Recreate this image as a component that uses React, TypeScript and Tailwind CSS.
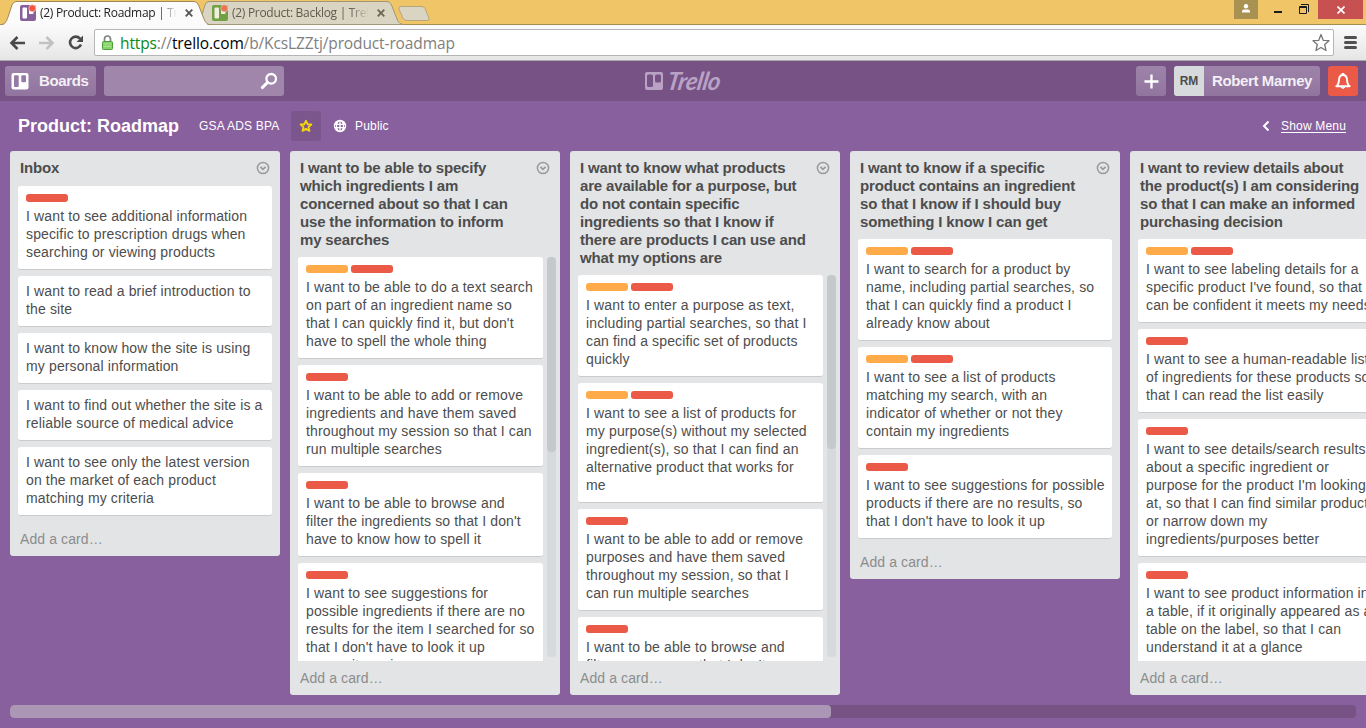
import React from "react";

type Label = "o" | "r";
type Card = { labels?: Label[]; text: string };
type List = { title: string; cards: Card[]; thumb?: string; fixed?: boolean };

const lists: List[] = [
  {
    title: "Inbox",
    cards: [
      { labels: ["r"], text: "I want to see additional information\nspecific to prescription drugs when\nsearching or viewing products" },
      { text: "I want to read a brief introduction to\nthe site" },
      { text: "I want to know how the site is using\nmy personal information" },
      { text: "I want to find out whether the site is a\nreliable source of medical advice" },
      { text: "I want to see only the latest version\non the market of each product\nmatching my criteria" },
    ],
  },
  {
    title: "I want to be able to specify\nwhich ingredients I am\nconcerned about so that I can\nuse the information to inform\nmy searches",
    fixed: true,
    thumb: "h-[195px]",
    cards: [
      { labels: ["o", "r"], text: "I want to be able to do a text search\non part of an ingredient name so\nthat I can quickly find it, but don't\nhave to spell the whole thing" },
      { labels: ["r"], text: "I want to be able to add or remove\ningredients and have them saved\nthroughout my session so that I can\nrun multiple searches" },
      { labels: ["r"], text: "I want to be able to browse and\nfilter the ingredients so that I don't\nhave to know how to spell it" },
      { labels: ["r"], text: "I want to see suggestions for\npossible ingredients if there are no\nresults for the item I searched for so\nthat I don't have to look it up\nacross items in" },
    ],
  },
  {
    title: "I want to know what products\nare available for a purpose, but\ndo not contain specific\ningredients so that I know if\nthere are products I can use and\nwhat my options are",
    fixed: true,
    thumb: "h-[174px]",
    cards: [
      { labels: ["o", "r"], text: "I want to enter a purpose as text,\nincluding partial searches, so that I\ncan find a specific set of products\nquickly" },
      { labels: ["o", "r"], text: "I want to see a list of products for\nmy purpose(s) without my selected\ningredient(s), so that I can find an\nalternative product that works for\nme" },
      { labels: ["r"], text: "I want to be able to add or remove\npurposes and have them saved\nthroughout my session, so that I\ncan run multiple searches" },
      { labels: ["r"], text: "I want to be able to browse and\nfilter purposes so that I don't" },
    ],
  },
  {
    title: "I want to know if a specific\nproduct contains an ingredient\nso that I know if I should buy\nsomething I know I can get",
    cards: [
      { labels: ["o", "r"], text: "I want to search for a product by\nname, including partial searches, so\nthat I can quickly find a product I\nalready know about" },
      { labels: ["o", "r"], text: "I want to see a list of products\nmatching my search, with an\nindicator of whether or not they\ncontain my ingredients" },
      { labels: ["r"], text: "I want to see suggestions for possible\nproducts if there are no results, so\nthat I don't have to look it up" },
    ],
  },
  {
    title: "I want to review details about\nthe product(s) I am considering\nso that I can make an informed\npurchasing decision",
    fixed: true,
    thumb: "h-[200px]",
    cards: [
      { labels: ["o", "r"], text: "I want to see labeling details for a\nspecific product I've found, so that I\ncan be confident it meets my needs" },
      { labels: ["r"], text: "I want to see a human-readable list\nof ingredients for these products so\nthat I can read the list easily" },
      { labels: ["r"], text: "I want to see details/search results\nabout a specific ingredient or\npurpose for the product I'm looking\nat, so that I can find similar products\nor narrow down my\ningredients/purposes better" },
      { labels: ["r"], text: "I want to see product information in\na table, if it originally appeared as a\ntable on the label, so that I can\nunderstand it at a glance" },
    ],
  },
];

function CardView({ card }: { card: Card }) {
  return (
    <div className={`shrink-0 whitespace-pre rounded-[3px] border-b border-[#c9cbcc] bg-white px-2 pb-2 text-[14px] leading-[18px] tracking-[0.135px] text-[#4d4d4d] ${card.labels ? "pt-2" : "pt-1.5"}`}>
      {card.labels && (
        <div className="mb-[5px] flex gap-[3px]">
          {card.labels.map((l, i) => (
            <span key={i} className={`h-2 w-[42px] rounded-[3px] ${l === "o" ? "bg-[#ffab4a]" : "bg-[#eb5a46]"}`} />
          ))}
        </div>
      )}
      {card.text}
    </div>
  );
}

function ListView({ list }: { list: List }) {
  return (
    <section className={`flex w-[270px] shrink-0 flex-col rounded-[3px] bg-[#e2e4e6] ${list.fixed ? "h-[544px]" : ""}`}>
      <header className="flex min-h-[35px] shrink-0 items-start justify-between pb-2 pl-2.5 pr-2.5 pt-2">
        <h2 className="whitespace-pre text-[15px] font-bold leading-[18px] tracking-[-0.165px] text-[#4d4d4d]">{list.title}</h2>
        <svg className="mt-[2px] shrink-0" width="14" height="14" viewBox="0 0 14 14" fill="none" stroke="#999" strokeWidth="1.5">
          <circle cx="7" cy="7" r="5.6" />
          <path d="M4.400 5.900 7 8.300 9.600 5.900" strokeWidth="1.700" />
        </svg>
      </header>
      <div className="flex min-h-0 flex-1 pl-2">
        <div className={`flex flex-col gap-1.5 overflow-hidden ${list.fixed ? "w-[245px]" : "w-[254px] pb-1.5"}`}>
          {list.cards.map((c, i) => (
            <CardView key={i} card={c} />
          ))}
        </div>
        {list.fixed && (
          <div className="mb-1 ml-1 w-[9px] rounded bg-[#d6dadc]">
            <div className={`rounded bg-[#c4c9cc] ${list.thumb}`} />
          </div>
        )}
      </div>
      <div className="h-[34px] shrink-0 px-2.5 py-2 text-[14px] leading-[18px] tracking-[0.1px] text-[#8c8c8c]">Add a card…</div>
    </section>
  );
}

function Favicon({ color, dim }: { color: string; dim?: boolean }) {
  return (
    <svg width="17" height="17" viewBox="0 0 17 17" className="shrink-0">
      <rect x="0" y="1" width="16" height="16" rx="2" fill={color} />
      <rect x="2.500" y="3.500" width="4.500" height="11" rx="1" fill={dim ? "#f0eedf" : "#fff"} />
      <rect x="9" y="3.500" width="4.500" height="6.500" rx="1" fill={dim ? "#f0eedf" : "#fff"} />
      <circle cx="12.300" cy="4.300" r="3.500" fill={dim ? "#ea7350" : "#f2543d"} stroke={dim ? "#e3cdbb" : "#f8ded8"} strokeWidth=".7" />
    </svg>
  );
}

function TabLabel({ children, active }: { children: React.ReactNode; active?: boolean }) {
  return (
    <span className={`overflow-hidden whitespace-pre font-['Open_Sans','Noto_Sans',sans-serif] text-[12px] leading-4 tracking-[-0.29px] ${active ? "w-[137px] text-[#222] [mask-image:linear-gradient(to_right,#000_86%,transparent)]" : "w-[137px] text-[#5f5a50] [mask-image:linear-gradient(to_right,#000_86%,transparent)]"}`}>
      {children}
    </span>
  );
}

function CloseX({ color }: { color: string }) {
  return (
    <svg width="8" height="8" viewBox="0 0 8 8" stroke={color} strokeWidth="1.800" className="shrink-0">
      <path d="M.7.7l6.600 6.600M7.300.7.7 7.300" />
    </svg>
  );
}

function TabStrip() {
  return (
    <div className="relative h-[25px] bg-[#efc568]">
      <svg className="absolute left-0 top-0" width="1366" height="25" viewBox="0 0 1366 25">
        <path d="M0 24.500H1366" stroke="#a58d50" />
        <path d="M195 24.500C200 24 199 22 201 18L205 5Q206 1.500 209 1.500H387Q390 1.500 391.500 5L397 19Q399 24.500 404 24.500Z" fill="#dad5c2" stroke="#a19777" />
        <path d="M401 6.500H422Q424 6.500 425 8.500L429 18Q430 20.500 427 20.500H407Q404 20.500 403 18.500L399 9Q398 6.500 401 6.500Z" fill="#dad5c2" stroke="#b5a77b" />
        <path d="M-2 25C6 24.500 6 22 8 17L12 5Q13.500 1.500 16 1.500H194Q197 1.500 198.500 5L204 19Q206 24.500 211 25Z" fill="#fbfbfb" stroke="#a18a51" />
        <rect x="4" y="24" width="203" height="1" fill="#fafafa" />
      </svg>
      <div className="relative flex h-[25px] items-center">
        <div className="ml-5 flex items-center"><Favicon color="#87609a" /><span className="ml-[3px] flex"><TabLabel active>(2) Product: Roadmap | Trello</TabLabel></span><span className="ml-[8px] flex"><CloseX color="#555" /></span></div>
        <div className="ml-[19px] flex items-center"><Favicon color="#72a144" dim /><span className="ml-[3px] flex"><TabLabel>(2) Product: Backlog | Trello</TabLabel></span><span className="ml-[8px] flex"><CloseX color="#6b6552" /></span></div>
      </div>
      <div className="absolute right-0 top-0 flex h-[19px] items-start">
        <div className="flex h-[19px] w-6 items-center justify-center bg-[#a99151]">
          <svg width="10" height="9" viewBox="0 0 10 9" fill="#fff" className="mb-[3px]"><circle cx="5" cy="2.200" r="2.200" /><path d="M1 8.500V7.500Q1 5.500 3 5.500H7Q9 5.500 9 7.500V8.500Z" /></svg>
        </div>
        <svg width="60" height="19" viewBox="0 0 60 19" fill="none" stroke="#1c1c1c">
          <path d="M16 12H24" strokeWidth="2" />
          <path d="M41.500 6.500H48.500V13.500H41.500ZM41 7.500H49" />
          <path d="M43 4.500H50.500V12" />
        </svg>
        <div className="mr-[3px] flex h-[19px] w-[45px] items-center justify-center bg-[#c75050]">
          <svg width="8" height="8" viewBox="0 0 8 8" stroke="#fff" strokeWidth="1.700"><path d="M.5.5l7 7M7.500.5l-7 7" /></svg>
        </div>
      </div>
    </div>
  );
}

function Toolbar() {
  return (
    <div className="flex h-9 items-center border-b border-[#a9a9a9] bg-linear-to-b from-[#fbfbfb] to-[#e6e6e6] pl-[9px] pr-[9px]">
      <svg width="76" height="18" viewBox="0 0 76 18" fill="none" strokeWidth="2.600">
        <path d="M16 9H2.500M8.500 3 2.500 9 8.500 15" stroke="#4a4a4a" />
        <path d="M30 9H43.500M37.500 3 43.500 9 37.500 15" stroke="#c2c2c2" />
        <path d="M71 4.600A5.700 5.700 0 1 0 72 10.500" stroke="#4a4a4a" />
        <path d="M74 1.500V8H67.500Z" fill="#4a4a4a" />
      </svg>
      <div className="ml-[9px] flex h-[27px] flex-1 items-center rounded-[2px] border border-[#b5b5b5] bg-white pl-[7px] pr-[2px]">
        <svg width="11" height="15" viewBox="0 0 11 15">
          <path d="M2.500 7V4A3 3 0 0 1 8.500 4V7" fill="none" stroke="#7e8580" strokeWidth="1.700" />
          <rect x=".5" y="6.500" width="10" height="8" rx="1" fill="#85d267" stroke="#4f9d3a" />
          <path d="M1.500 9H9.500M1.500 11.500H9.500" stroke="#a7e48b" />
        </svg>
        <span className="ml-[7px] flex-1 whitespace-pre font-['Open_Sans','Noto_Sans',sans-serif] text-[15.500px] leading-5 tracking-[-0.12px] text-[#808080]"><span className="text-[#0b8a15]">https</span>://<span className="text-black">trello.com</span>/b/KcsLZZtj/product-roadmap</span>
        <svg width="20" height="20" viewBox="0 0 20 20" fill="#fff" stroke="#777" strokeWidth="1.300" strokeLinejoin="round"><path d="M10 1.500 12.300 7.400 18 7.700 13.700 11.500 15 17.500 10 14.500 5 17.500 6.300 11.500 2 7.700 7.700 7.400Z" /></svg>
      </div>
      <div className="ml-[10px] flex w-[13px] flex-col gap-[2px]"><i className="h-[3px] rounded-sm bg-[#505050]" /><i className="h-[3px] rounded-sm bg-[#505050]" /><i className="h-[3px] rounded-sm bg-[#505050]" /></div>
    </div>
  );
}

function BoardMark({ color, hole, className }: { color: string; hole: string; className?: string }) {
  return (
    <svg width="18" height="18" viewBox="0 0 18 18" className={className}>
      <rect x=".5" y="1" width="17" height="16.500" rx="2" fill={color} />
      <rect x="3" y="3.300" width="4.700" height="11.700" rx="1" fill={hole} />
      <rect x="10.300" y="3.300" width="4.700" height="7" rx="1" fill={hole} />
    </svg>
  );
}

function TopBar() {
  const btn = "flex h-[30px] items-center rounded-[3px] bg-linear-to-b from-[#9d83a9] to-[#92759f]";
  return (
    <header className="grid h-10 grid-cols-[1fr_auto_1fr] items-center bg-[#765285] pl-[5px] pr-2 text-[15px] font-bold tracking-[-0.38px] text-[#f3eff5]">
      <div className="flex gap-2">
        <div className={`${btn} w-[91px] pl-1.5`}><BoardMark color="#fff" hole="#977ba4" /><span className="ml-[10px]">Boards</span></div>
        <div className="flex h-[30px] w-[180px] items-center justify-end rounded-[3px] bg-[#9f86aa] pr-1.5">
          <svg width="18" height="18" viewBox="0 0 18 18" fill="none" stroke="#fff"><circle cx="11.200" cy="6.800" r="4.800" strokeWidth="2.300" /><path d="M7.600 10.400 2.300 15.600" strokeWidth="2.900" strokeLinecap="round" /></svg>
        </div>
      </div>
      <div className="flex items-center">
        <svg width="78" height="28" viewBox="0 0 78 28">
          <rect x="2" y="5" width="18" height="18" rx="2" fill="#b9a2c3" />
          <rect x="4" y="7.500" width="6" height="12.500" rx="1.500" fill="#765285" /><rect x="12" y="7.500" width="6" height="8" rx="1.500" fill="#765285" />
          <text x="22" y="22.500" textLength="53" lengthAdjust="spacingAndGlyphs" fill="#b9a2c3" fontFamily="Lato, sans-serif" fontWeight="700" fontStyle="italic" fontSize="25" transform="translate(5 0) skewX(-10)">Trello</text>
        </svg>
      </div>
      <div className="flex justify-end gap-2">
        <div className={`${btn} w-[30px] justify-center`}><svg width="15" height="15" viewBox="0 0 15 15" stroke="#fff" strokeWidth="2.300"><path d="M7.500 .5V14.500M.5 7.500H14.500" /></svg></div>
        <div className={`${btn} w-[146px] overflow-hidden`}>
          <span className="flex h-full w-[30px] items-center justify-center bg-[#d6dadc] text-[12px] tracking-normal text-[#4d4d4d]">RM</span>
          <span className="whitespace-pre pl-2">Robert Marney</span>
        </div>
        <div className="flex h-[30px] w-[30px] items-center justify-center rounded-[3px] bg-[#eb5a46]">
          <svg width="16" height="18" viewBox="0 0 16 18" fill="none" stroke="#fff" strokeWidth="1.900" strokeLinejoin="round"><path d="M1.300 14.300C4 12.500 3.700 10.500 4 7.500 4.300 4.500 5.800 3 8 3S11.700 4.500 12 7.500C12.300 10.500 12 12.500 14.700 14.300Z" /><path d="M8 1V3" strokeWidth="2.600" /><path d="M6 15.200Q8 17.700 10 15.200Z" fill="#fff" strokeWidth="1" /></svg>
        </div>
      </div>
    </header>
  );
}

function BoardHeader() {
  return (
    <div className="flex h-[50px] items-center pl-[18px] pr-5 text-[12px] tracking-[0.18px] text-white">
      <h1 className="w-[181px] whitespace-pre text-[18px] font-bold tracking-normal">Product: Roadmap</h1>
      <span className="w-[92px] whitespace-pre">GSA ADS BPA</span>
      <span className="flex h-[30px] w-[30px] items-center justify-center rounded-[3px] bg-[#7b568d]">
        <svg width="14" height="14" viewBox="0 0 14 14" fill="none" stroke="#f5d60d" strokeWidth="1.900" strokeLinejoin="round"><path d="M7 1.800 8.600 5.200 12.300 5.500 9.500 8.100 10.400 11.800 7 9.900 3.600 11.800 4.500 8.100 1.700 5.500 5.400 5.200Z" /></svg>
      </span>
      <svg className="ml-3" width="14" height="14" viewBox="0 0 14 14">
        <circle cx="7" cy="7" r="6.200" fill="#fff" />
        <path d="M6.300 2.200V4.700H4.500Q5 3 6.300 2.200ZM7.700 2.200V4.700H9.500Q9 3 7.700 2.200ZM6.300 11.800V9.300H4.500Q5 11 6.300 11.800ZM7.700 11.800V9.300H9.500Q9 11 7.700 11.800ZM4.200 6H6.300V8H4.200ZM7.700 6H9.800V8H7.700ZM2.300 6H3V8H2.300ZM11 6H11.700V8H11Z" fill="#89609e" />
      </svg>
      <span className="ml-2">Public</span>
      <span className="ml-auto flex items-center"><svg width="8" height="12" viewBox="0 0 8 12" fill="none" stroke="#fff" strokeWidth="2"><path d="M6.500 1.500 2 6 6.500 10.500" /></svg><span className="ml-[11px] underline underline-offset-2">Show Menu</span></span>
    </div>
  );
}

export default function App() {
  return (
    <div className="flex h-[728px] w-[1366px] flex-col overflow-hidden bg-[#89609e] font-['Liberation_Sans',Arial,sans-serif]">
      <TabStrip />
      <Toolbar />
      <TopBar />
      <BoardHeader />
      <main className="flex h-[544px] shrink-0 items-start gap-2.5 overflow-hidden pl-2.5">
        {lists.map((l, i) => (
          <ListView key={i} list={l} />
        ))}
      </main>
      <div className="ml-2.5 mt-2.5 h-[13px] w-[1346px] shrink-0 overflow-hidden rounded bg-[#765285]">
        <div className="h-full w-[821px] rounded bg-[#ac96b5]" />
      </div>
    </div>
  );
}
